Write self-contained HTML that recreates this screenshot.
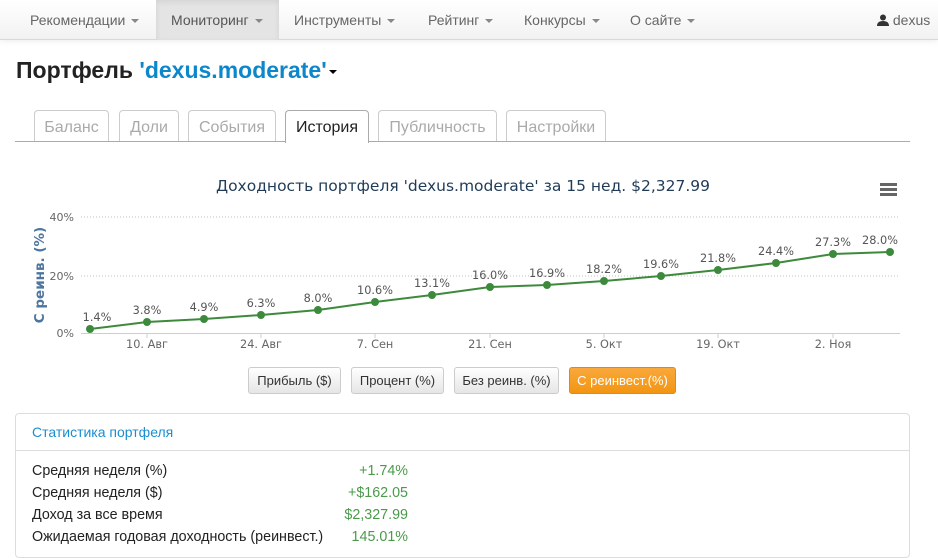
<!DOCTYPE html>
<html><head><meta charset="utf-8"><style>
*{box-sizing:border-box;margin:0;padding:0}
body{width:938px;height:558px;overflow:hidden;background:#fff;font-family:"Liberation Sans","DejaVu Sans",sans-serif;font-size:14px;color:#333;position:relative}
.nav{position:absolute;left:0;top:0;width:938px;height:40px;background:linear-gradient(#fff,#f2f2f2);border-bottom:1px solid #d8d8d8;box-shadow:0 1px 6px rgba(0,0,0,.08)}
.nav a{position:absolute;top:0;height:40px;line-height:40px;color:#666;font-size:14px;white-space:nowrap}
.caret{display:inline-block;width:0;height:0;border-left:4px solid transparent;border-right:4px solid transparent;border-top:4px solid #888;vertical-align:middle;margin-left:6px}
.act{background:#e4e4e4;box-shadow:inset 0 2px 6px rgba(0,0,0,.08)}
h1{position:absolute;left:16px;top:57px;font-size:23px;font-weight:bold;color:#222;white-space:nowrap}
h1 span{color:#0c87cc}
.tab{position:absolute;top:110px;height:32px;border:1px solid #ccc;border-bottom:none;border-radius:4px 4px 0 0;color:#aaa;font-size:16px;line-height:33px;text-align:center;background:#fff}
.tab.on{border-color:#aaa;color:#222;height:33px;z-index:2}
.tabline{position:absolute;left:15px;top:141px;width:895px;height:1px;background:#aaa}
.btn{position:absolute;top:367px;height:27px;border:1px solid #ccc;border-radius:3px;background:linear-gradient(#fff,#e6e6e6);font-size:13px;line-height:25px;text-align:center;color:#333}
.btn.or{background:linear-gradient(#f9a83b,#f39512);border-color:#e08a10;color:#fff}
.panel{position:absolute;left:15px;top:413px;width:895px;height:145px;border:1px solid #ddd;border-radius:4px}
.ph{height:37px;border-bottom:1px solid #ddd;color:#1a8fd0;font-size:14px;line-height:37px;padding-left:16px}
.row{position:absolute;left:16px;font-size:14.3px;color:#222}
.val{position:absolute;right:501px;font-size:14.3px;color:#4a9a4a}
</style></head><body>
<div class="nav">
<a style="left:30px">Рекомендации<span class="caret"></span></a>
<a class="act" style="left:156px;width:123px;padding-left:15px;color:#555">Мониторинг<span class="caret"></span></a>
<a style="left:294px">Инструменты<span class="caret"></span></a>
<a style="left:428px">Рейтинг<span class="caret"></span></a>
<a style="left:524px">Конкурсы<span class="caret"></span></a>
<a style="left:630px">О сайте<span class="caret"></span></a>
<a style="left:877px"><svg width="12" height="12" viewBox="0 0 12 12" style="vertical-align:-1px"><circle cx="6" cy="3.5" r="3" fill="#333"/><path d="M0 12 Q0 7 6 7 Q12 7 12 12Z" fill="#333"/></svg> dexus</a>
</div>
<h1>Портфель <span>'dexus.moderate'</span><span style="display:inline-block;width:0;height:0;border-left:4px solid transparent;border-right:4px solid transparent;border-top:4px solid #000;vertical-align:middle;margin-left:2px"></span></h1>
<div class="tab" style="left:34px;width:75px">Баланс</div>
<div class="tab" style="left:119px;width:60px">Доли</div>
<div class="tab" style="left:188px;width:88px">События</div>
<div class="tab on" style="left:285px;width:84px">История</div>
<div class="tab" style="left:378px;width:119px">Публичность</div>
<div class="tab" style="left:506px;width:100px">Настройки</div>
<div class="tabline"></div>
<svg style="position:absolute;left:0;top:0" width="938" height="400" font-family="'DejaVu Sans',sans-serif">
<text x="463" y="191" text-anchor="middle" font-size="15.5" fill="#1f3b57">Доходность портфеля 'dexus.moderate' за 15 нед. $2,327.99</text>
<g fill="#666"><rect x="880" y="183" width="17" height="3"/><rect x="880" y="188" width="17" height="3"/><rect x="880" y="193" width="17" height="3"/></g>
<g stroke="#c0c0c0" stroke-dasharray="1,2"><line x1="81" y1="217" x2="900" y2="217"/><line x1="81" y1="276" x2="900" y2="276"/></g>
<line x1="81" y1="333.5" x2="900" y2="333.5" stroke="#c0d0e0"/>
<g stroke="#c0d0e0"><line x1="147" y1="333" x2="147" y2="338"/><line x1="261" y1="333" x2="261" y2="338"/><line x1="375" y1="333" x2="375" y2="338"/><line x1="490" y1="333" x2="490" y2="338"/><line x1="604" y1="333" x2="604" y2="338"/><line x1="718" y1="333" x2="718" y2="338"/><line x1="833" y1="333" x2="833" y2="338"/></g>
<g font-size="11" fill="#666" text-anchor="end"><text x="74" y="221">40%</text><text x="74" y="280">20%</text><text x="74" y="337">0%</text></g>
<text transform="translate(44,275) rotate(-90)" text-anchor="middle" font-size="13.5" font-weight="bold" fill="#4d759e">С реинв. (%)</text>
<g font-size="11.3" fill="#666" text-anchor="middle"><text x="147" y="348">10. Авг</text><text x="261" y="348">24. Авг</text><text x="375" y="348">7. Сен</text><text x="490" y="348">21. Сен</text><text x="604" y="348">5. Окт</text><text x="718" y="348">19. Окт</text><text x="833" y="348">2. Ноя</text></g>
<polyline fill="none" stroke="#3d8a3d" stroke-width="2" points="90,329 147,322 204,319 261,315 318,310 375,302 432,295 490,287 547,285 604,281 661,276 718,270 776,263 833,254 890,252"/>
<g fill="#3d8a3d"><circle cx="90" cy="329" r="4"/><circle cx="147" cy="322" r="4"/><circle cx="204" cy="319" r="4"/><circle cx="261" cy="315" r="4"/><circle cx="318" cy="310" r="4"/><circle cx="375" cy="302" r="4"/><circle cx="432" cy="295" r="4"/><circle cx="490" cy="287" r="4"/><circle cx="547" cy="285" r="4"/><circle cx="604" cy="281" r="4"/><circle cx="661" cy="276" r="4"/><circle cx="718" cy="270" r="4"/><circle cx="776" cy="263" r="4"/><circle cx="833" cy="254" r="4"/><circle cx="890" cy="252" r="4"/></g>
<g font-size="11.3" fill="#555" text-anchor="middle"><text x="97" y="321">1.4%</text><text x="147" y="314">3.8%</text><text x="204" y="311">4.9%</text><text x="261" y="307">6.3%</text><text x="318" y="302">8.0%</text><text x="375" y="294">10.6%</text><text x="432" y="287">13.1%</text><text x="490" y="279">16.0%</text><text x="547" y="277">16.9%</text><text x="604" y="273">18.2%</text><text x="661" y="268">19.6%</text><text x="718" y="262">21.8%</text><text x="776" y="255">24.4%</text><text x="833" y="246">27.3%</text><text x="880" y="244">28.0%</text></g>
</svg>
<div class="btn" style="left:248px;width:93px">Прибыль ($)</div>
<div class="btn" style="left:351px;width:93px">Процент (%)</div>
<div class="btn" style="left:454px;width:105px">Без реинв. (%)</div>
<div class="btn or" style="left:569px;width:107px">С реинвест.(%)</div>
<div class="panel"><div class="ph">Статистика портфеля</div>
<div class="row" style="top:49px">Средняя неделя (%)</div><div class="val" style="top:49px">+1.74%</div>
<div class="row" style="top:71px">Средняя неделя ($)</div><div class="val" style="top:71px">+$162.05</div>
<div class="row" style="top:93px">Доход за все время</div><div class="val" style="top:93px">$2,327.99</div>
<div class="row" style="top:115px">Ожидаемая годовая доходность (реинвест.)</div><div class="val" style="top:115px">145.01%</div>
</div>
</body></html>
